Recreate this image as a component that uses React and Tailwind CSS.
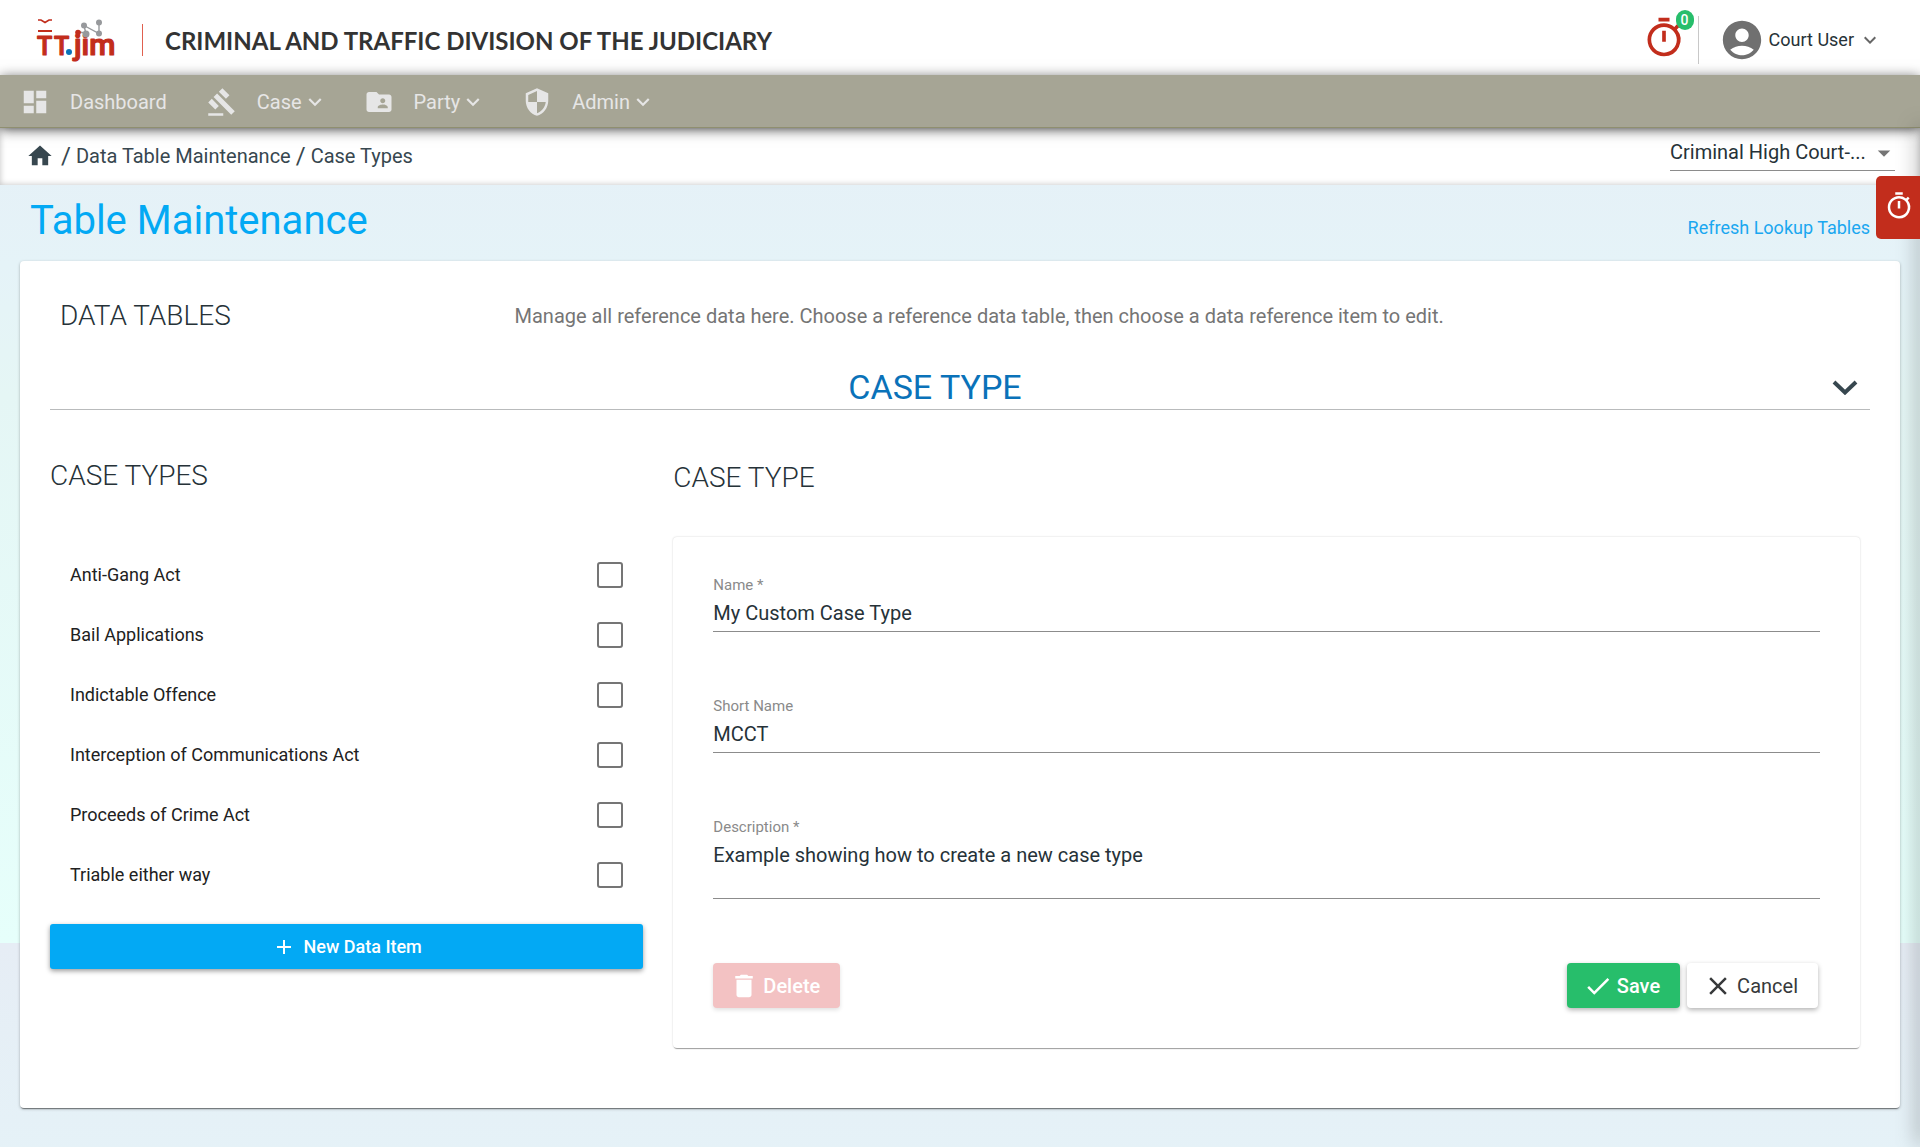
import {
  MdAccountCircle, MdAdd, MdArrowDropDown, MdCheck, MdClose, MdDashboard, MdDelete,
  MdExpandMore, MdFolderShared, MdGavel, MdHome, MdOutlineTimer, MdSecurity,
} from "react-icons/md";

const navItems = [
  { label: "Dashboard", Icon: MdDashboard, menu: false },
  { label: "Case", Icon: MdGavel, menu: true },
  { label: "Party", Icon: MdFolderShared, menu: true },
  { label: "Admin", Icon: MdSecurity, menu: true },
];

const caseTypes = [
  "Anti-Gang Act",
  "Bail Applications",
  "Indictable Offence",
  "Interception of Communications Act",
  "Proceeds of Crime Act",
  "Triable either way",
];

function Logo() {
  return (
    <svg className="h-11 w-[84px]" viewBox="0 0 84 44" role="img" aria-label="TT.jim">
      <path d="M2 2h3l4 2.500L13 2h3" fill="none" stroke="#c22d1c" strokeWidth="1.600" />
      <path d="M2 13h14" stroke="#c22d1c" strokeWidth="2" />
      <g fill="#c22d1c" stroke="#c22d1c" strokeLinejoin="round" strokeWidth="1.200" fontFamily="Roboto, sans-serif" fontWeight="500">
        <text x="1" y="37" fontSize="25">T</text>
        <text x="18" y="37" fontSize="25">T</text>
        <text x="38" y="37" fontSize="30">jim</text>
      </g>
      <circle cx="33" cy="34" r="3" fill="#0a72b9" />
      <g stroke="#97999c" strokeWidth="1.400" fill="#97999c">
        <path d="M50 16L48 7.500L63 15.500V4.500M43 14l6 1" fill="none" />
        <circle cx="48" cy="7.500" r="2.300" />
        <circle cx="50" cy="16" r="2.800" />
        <circle cx="63" cy="15.500" r="2.300" />
        <circle cx="63" cy="4.500" r="2.300" />
      </g>
      <circle cx="42" cy="14.500" r="2.800" fill="#c22d1c" />
    </svg>
  );
}

function Header() {
  return (
    <header className="flex h-[75px] items-center justify-between bg-white pt-1 pr-[38px] pl-9">
      <div className="flex items-center">
        <Logo />
        <div className="ml-[22px] h-8 w-px bg-[#e0604f]" />
        <div className="ml-[22px] pt-0.5 font-[Lato] text-[24px] font-bold whitespace-nowrap text-[#333]">
          CRIMINAL AND TRAFFIC DIVISION OF THE JUDICIARY
        </div>
      </div>
      <div className="flex items-center">
        <button type="button" aria-label="Timers" className="relative mr-3 mb-1 text-[#c22d1c]">
          <MdOutlineTimer className="size-11" />
          <span className="absolute -top-1.5 -right-2 flex h-5 w-[18px] items-center justify-center rounded-full bg-[#27be6b] text-sm font-medium text-white">
            0
          </span>
        </button>
        <div className="mr-5 h-12 w-px bg-[#c8c8c8]" />
        <button type="button" className="flex items-center text-lg text-[#263238]">
          <MdAccountCircle className="mr-1 size-[46px] text-[#707070]" />
          Court User
          <MdExpandMore className="ml-1 size-6 text-[#666]" />
        </button>
      </div>
    </header>
  );
}

function Nav() {
  return (
    <nav className="relative z-10 flex h-[53px] items-center gap-9 border-b border-[#8f8f70] bg-[#a6a595] px-5 pt-0.5 text-xl text-[#e6e6e6] shadow-[0_2px_12px_rgba(0,0,0,0.6)]">
      {navItems.map(({ label, Icon, menu }) =>
        menu ? (
          <button key={label} type="button" className="flex items-center">
            <Icon className="mr-5 size-[30px]" />
            {label}
            <MdExpandMore className="size-[26px]" />
          </button>
        ) : (
          <a key={label} href="#dashboard" className="mr-1 flex items-center">
            <Icon className="mr-5 size-[30px]" />
            {label}
          </a>
        )
      )}
    </nav>
  );
}

function Breadcrumb() {
  return (
    <div className="flex h-[57px] items-center justify-between bg-white pr-[25px] pl-[26px] shadow-[inset_0_0_6px_rgba(0,0,0,0.25)]">
      <div className="flex items-center gap-[5px] pb-0.5 text-xl text-[#37474f]">
        <a href="#home" aria-label="Home" className="mr-0.5">
          <MdHome className="size-7" />
        </a>
        <span className="text-2xl">/</span>
        <a href="#tables">Data Table Maintenance</a>
        <span className="text-2xl">/</span>
        <a href="#case-types">Case Types</a>
      </div>
      <div className="relative mb-2 w-[225px] border-b border-[#8c8c8c]">
        <select aria-label="Court" className="block w-full appearance-none bg-transparent text-xl leading-9 text-[#263238] outline-none">
          <option>Criminal High Court-...</option>
        </select>
        <MdArrowDropDown className="pointer-events-none absolute top-1 -right-1 size-[30px] text-[#757575]" />
      </div>
    </div>
  );
}

function Field({ id, label, value, multiline }) {
  const box = "block w-full resize-none border-b border-[#8c8c8c] bg-transparent text-xl text-[#263238] outline-none";
  return (
    <div>
      <label htmlFor={id} className="block text-[15px] leading-5 text-[#8a8a8a]">
        {label}
      </label>
      {multiline ? (
        <textarea id={id} defaultValue={value} className={box + " h-[62px] pt-1"} />
      ) : (
        <input id={id} defaultValue={value} className={box + " h-[37px]"} />
      )}
    </div>
  );
}

function CaseTypeForm() {
  const raised = "flex h-[45px] items-center rounded-[4px] pr-5 pl-4 text-xl shadow-[0_2px_5px_rgba(0,0,0,0.3)]";
  return (
    <form className="rounded-[4px] bg-white px-10 pt-[38px] pb-10 shadow-[0_2px_1px_-1px_rgba(0,0,0,0.35),0_0_2px_rgba(0,0,0,0.2)]">
      <div className="flex flex-col gap-16">
        <Field id="name" label="Name *" value="My Custom Case Type" />
        <Field id="short-name" label="Short Name" value="MCCT" />
        <Field id="description" label="Description *" value="Example showing how to create a new case type" multiline />
      </div>
      <div className="mt-16 flex gap-[7px] pr-0.5">
        <button type="button" disabled className="mr-auto flex h-[45px] items-center rounded-[4px] bg-[#f3c2c3] pr-5 pl-4 text-xl font-medium text-white shadow-[0_2px_4px_rgba(0,0,0,0.12)]">
          <MdDelete className="mr-1 size-[30px]" />
          Delete
        </button>
        <button type="button" className={raised + " bg-[#27be6b] font-medium text-white"}>
          <MdCheck className="mr-1 size-[30px]" />
          Save
        </button>
        <button type="button" className={raised + " bg-white text-[#37393b]"}>
          <MdClose className="mr-1 size-[30px]" />
          Cancel
        </button>
      </div>
    </form>
  );
}

export default function App() {
  return (
    <div className="relative min-h-screen overflow-hidden bg-[linear-gradient(#e6edf5,#e5f3f8_28%,#e5f6f5_42%,#e6fffb)] bg-[length:100%_943px] font-[Roboto,sans-serif]">
      <Header />
      <div className="relative">
        <Nav />
        <Breadcrumb />
        <main className="px-5 pb-9">
          <div className="flex h-[76px] items-start justify-between pr-[30px] pl-2.5">
            <h1 className="pt-3 text-[40px] leading-[48px] text-[#03a9f4]">Table Maintenance</h1>
            <a href="#refresh" className="pt-[29px] text-lg text-[#1aa7f0]">Refresh Lookup Tables</a>
          </div>
          <section className="rounded-[4px] bg-white px-[30px] pt-[35px] pb-[60px] shadow-[0_2px_1px_-1px_rgba(0,0,0,0.4),0_1px_3px_rgba(0,0,0,0.3)]">
            <div className="flex h-10 items-center pl-2.5">
              <h2 className="w-1/4 text-[28px] font-light text-[#263238]">DATA TABLES</h2>
              <p className="pl-0.5 text-xl text-[#757575]">
                Manage all reference data here. Choose a reference data table, then choose a data reference item to edit.
              </p>
            </div>
            <button type="button" className="mt-7 flex h-[46px] w-full items-center border-b border-[#b9bbbc]">
              <span className="flex-1 pt-0.5 text-[34px] text-[#0a72b9]">CASE TYPE</span>
              <span className="flex w-[50px] justify-center text-[#37474f]">
                <svg className="h-4 w-[26px]" viewBox="0 0 26 16" fill="none" stroke="currentColor" strokeWidth="4">
                  <path d="M2 3l11 10.500L24 3" />
                </svg>
              </span>
            </button>
            <div className="mt-12 mr-2.5 grid grid-cols-[1fr_2fr] gap-[30px]">
              <div>
                <h2 className="text-[28px] leading-9 font-light text-[#263238]">CASE TYPES</h2>
                <ul className="mt-[51px] mb-[19px]">
                  {caseTypes.map((name) => (
                    <li key={name}>
                      <label className="flex h-[60px] items-center justify-between px-5 text-lg text-[#212121]">
                        {name}
                        <input type="checkbox" className="size-[26px] appearance-none rounded-[3px] border-2 border-[#757575]" />
                      </label>
                    </li>
                  ))}
                </ul>
                <button type="button" className="flex h-[45px] w-full items-center justify-center rounded-[3px] bg-[#03a9f4] text-lg font-medium text-white shadow-[0_2px_5px_rgba(0,0,0,0.4)]">
                  <MdAdd className="mr-2 size-6" />
                  New Data Item
                </button>
              </div>
              <div>
                <h2 className="mt-0.5 mb-[41px] text-[28px] leading-9 font-light text-[#263238]">CASE TYPE</h2>
                <CaseTypeForm />
              </div>
            </div>
          </section>
        </main>
        {/* Edge of the closed side drawer */}
        <div className="pointer-events-none absolute top-[53px] -right-1 bottom-0 z-10 w-1 shadow-[0_0_20px_1px_rgba(0,0,0,0.5)]" />
        <button type="button" aria-label="Open timer" className="absolute top-[101px] right-0 z-20 flex h-[63px] w-11 items-center rounded-l-[5px] bg-[#c22d1c] pb-1 pl-2 text-white">
          <MdOutlineTimer className="size-[30px]" />
        </button>
      </div>
    </div>
  );
}
